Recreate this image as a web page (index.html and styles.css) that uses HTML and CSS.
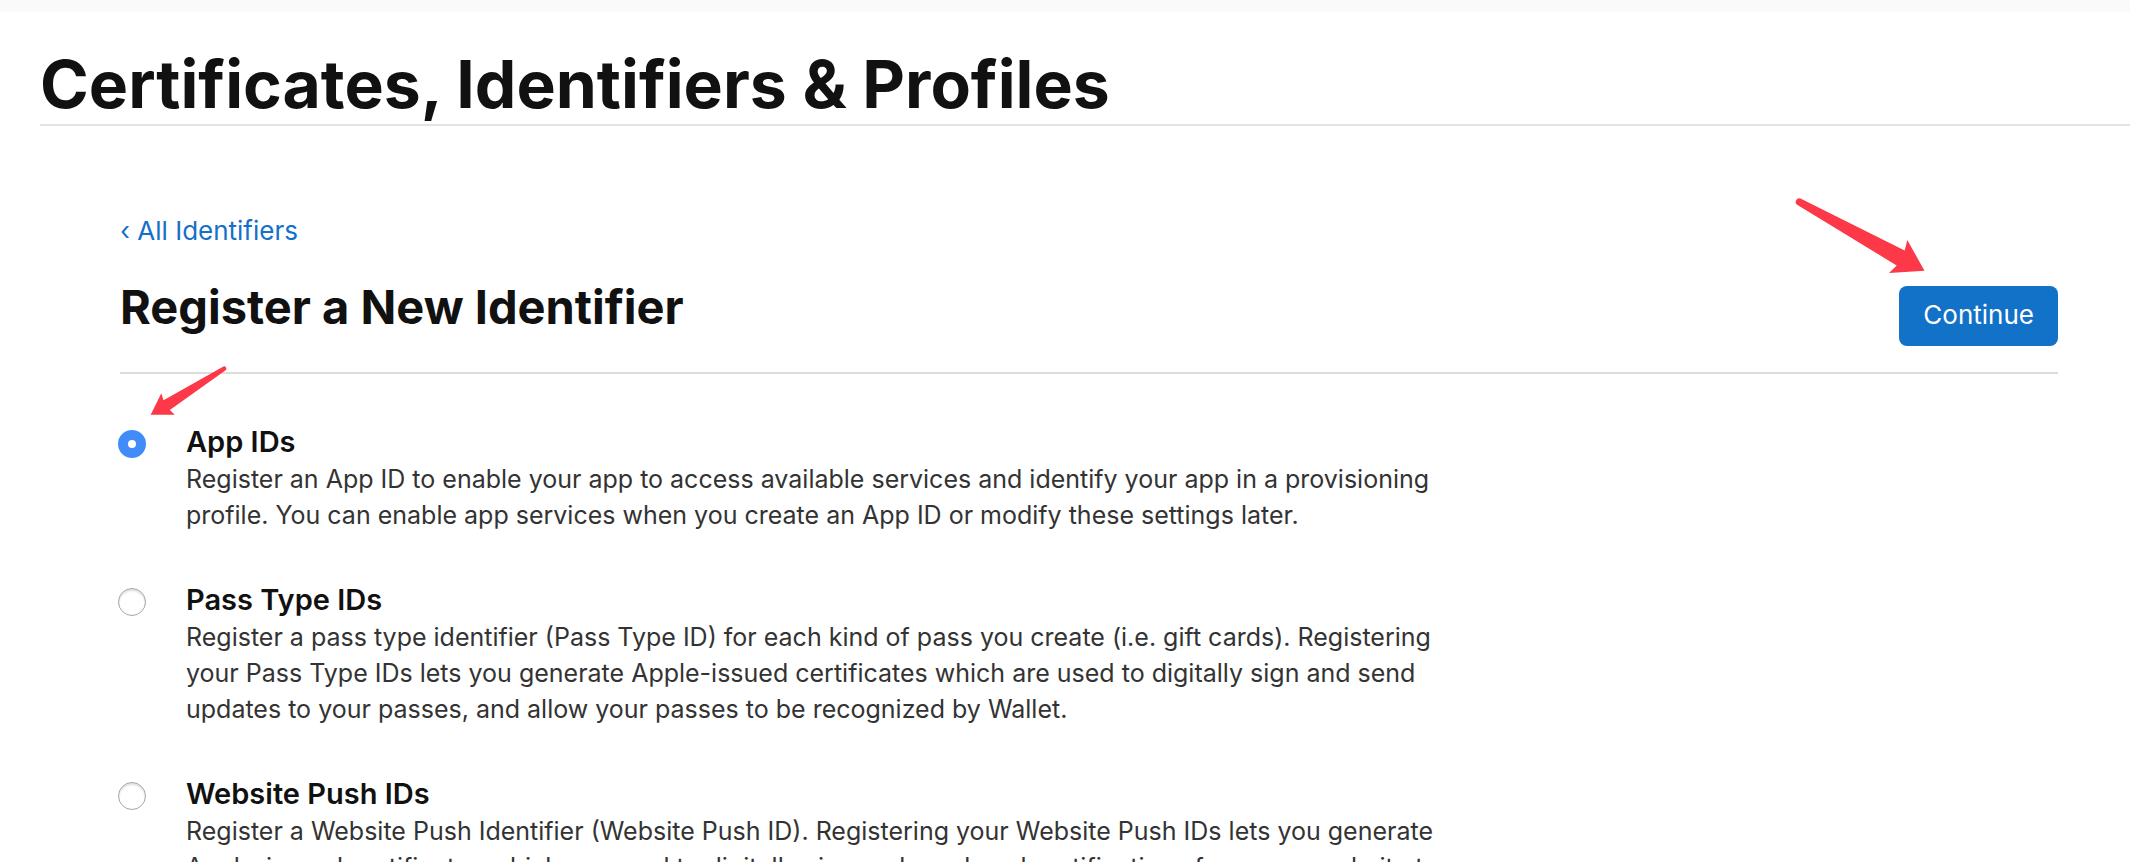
FILE: index.html
```html
<!DOCTYPE html>
<html lang="en">
<head>
<meta charset="utf-8">
<title>Certificates, Identifiers &amp; Profiles</title>
<link rel="stylesheet" href="styles.css">
</head>
<body>
<div class="top-band"></div>
<header class="page-header">
  <h1 class="page-title">Certificates, Identifiers &amp; Profiles</h1>
</header>
<main class="content">
  <a class="back-link" href="#">‹ All Identifiers</a>
  <div class="toolbar">
    <h2 class="section-title">Register a New Identifier</h2>
    <div class="action">
      <button class="continue" type="button">Continue</button>
      <svg class="arrow arrow-continue" width="132" height="80" viewBox="1794 195 132 80" aria-hidden="true">
        <path d="M1800.5 198.5 L1904.7 250.5 L1907.3 240 L1924.5 270.7 L1889 273 L1896.7 265.5 L1797.5 205 A3.6 3.6 0 0 1 1800.5 198.5 Z"/>
      </svg>
    </div>
  </div>
  <form class="options">
    <div class="option">
      <input class="radio" type="radio" name="identifier" id="app-ids" checked>
      <div class="option-text">
        <label class="option-title" for="app-ids">App IDs</label>
        <p class="option-desc">Register an App ID to enable your app to access available services and identify your app in a provisioning profile. You can enable app services when you create an App ID or modify these settings later.</p>
      </div>
      <svg class="arrow arrow-option" width="80" height="52" viewBox="148 365 80 52" aria-hidden="true">
        <path d="M223 366.8 L163.5 400.3 L161.3 393.3 L150.7 414.8 L174.8 414.8 L169.8 410 L225.3 370.6 A2.2 2.2 0 0 0 223 366.8 Z"/>
      </svg>
    </div>
    <div class="option">
      <input class="radio" type="radio" name="identifier" id="pass-ids">
      <div class="option-text">
        <label class="option-title" for="pass-ids">Pass Type IDs</label>
        <p class="option-desc">Register a pass type identifier (Pass Type ID) for each kind of pass you create (i.e. gift cards). Registering your Pass Type IDs lets you generate Apple-issued certificates which are used to digitally sign and send updates to your passes, and allow your passes to be recognized by Wallet.</p>
      </div>
    </div>
    <div class="option">
      <input class="radio" type="radio" name="identifier" id="push-ids">
      <div class="option-text">
        <label class="option-title" for="push-ids">Website Push IDs</label>
        <p class="option-desc">Register a Website Push Identifier (Website Push ID). Registering your Website Push IDs lets you generate Apple-issued certificates which are used to digitally sign and send push notifications from your website to</p>
      </div>
    </div>
  </form>
</main>
</body>
</html>
```
FILE: styles.css
```css
* {
  box-sizing: border-box;
}

body {
  margin: 0;
  height: 100vh;
  overflow: hidden;
  background: #fff;
  color: #111;
  font-family: Inter, "Liberation Sans", sans-serif;
  font-size: 26px;
  line-height: 36px;
}

.top-band {
  height: 12px;
  background: #fafafa;
}

.page-header {
  margin-left: 40px;
  padding-top: 32px;
  border-bottom: 2px solid #e3e3e3;
}

.page-title {
  margin: 0;
  font-size: 66px;
  font-weight: 700;
  line-height: 80px;
}

.content {
  padding: 87px 72px 0 120px;
}

.back-link {
  display: block;
  width: fit-content;
  color: #1470c8;
  text-decoration: none;
}

.toolbar {
  display: flex;
  justify-content: space-between;
  align-items: flex-start;
  padding: 28px 0 26px;
  border-bottom: 2px solid #dcdcdc;
}

.section-title {
  margin: 0;
  font-size: 47px;
  font-weight: 700;
  line-height: 60px;
}

.action {
  position: relative;
  margin-top: 9px;
}

.continue {
  display: block;
  height: 60px;
  padding: 0 24px 2px;
  border: 0;
  border-radius: 8px;
  background: #1272c8;
  color: #fff;
  font: inherit;
}

.arrow {
  position: absolute;
  fill: #fd3848;
}

.arrow-continue {
  right: 132px;
  top: -91px;
}

.options {
  display: flex;
  flex-direction: column;
  gap: 50px;
  padding-top: 50px;
}

.option {
  position: relative;
  display: flex;
  align-items: flex-start;
  gap: 40px;
  margin-left: -2px;
}

.arrow-option {
  left: 30px;
  top: -59px;
}

.radio {
  appearance: none;
  flex: none;
  width: 28px;
  height: 28px;
  margin: 6px 0 0;
  border: 1px solid #a6a6a6;
  border-radius: 50%;
  background: #fff;
  box-shadow: inset 0 2px 2px #e0e0e0;
}

.radio:checked {
  border: 10px solid #428cf9;
  box-shadow: none;
}

.option-text {
  max-width: 1274px;
}

.option-title {
  display: block;
  font-size: 29px;
  font-weight: 600;
}

.option-desc {
  margin: 1px 0 -1px;
  color: #333;
  font-size: 25px;
}
```
